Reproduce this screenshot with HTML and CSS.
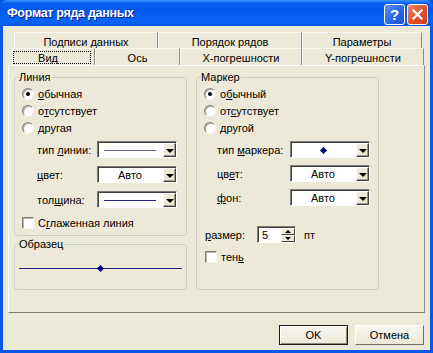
FILE: index.html
```html
<!DOCTYPE html>
<html>
<head>
<meta charset="utf-8">
<link rel="stylesheet" href="styles.css">
</head>
<body>
<div class="window">
  <div class="titlebar">
    <span class="title">Формат ряда данных</span>
    <div class="tbtns">
      <div class="tbtn help">?</div>
      <div class="tbtn close"><svg width="13" height="13" viewBox="0 0 13 13"><path d="M2.5 2.5L10.5 10.5M10.5 2.5L2.5 10.5" stroke="#fff" stroke-width="2.2" stroke-linecap="square"/></svg></div>
    </div>
  </div>
  <div class="client">
    <div class="tabs">
      <div class="tabrow row1">
        <div class="tab">Подписи данных</div>
        <div class="tab">Порядок рядов</div>
        <div class="tab">Параметры</div>
      </div>
      <div class="tabrow row2">
        <div class="tab sel"><span class="focus">Вид</span></div>
        <div class="tab">Ось</div>
        <div class="tab">X-погрешности</div>
        <div class="tab">Y-погрешности</div>
      </div>
    </div>
    <div class="panel">
      <div class="col-left">
        <div class="group g-line">
          <span class="legend">Линия</span>
          <div class="radios">
            <div class="opt"><span class="radio on"></span><span><u>о</u>бычная</span></div>
            <div class="opt"><span class="radio"></span><span>о<u>т</u>сутствует</span></div>
            <div class="opt"><span class="radio"></span><span>другая</span></div>
          </div>
          <div class="fields fl-left">
            <div class="field"><span class="flabel">тип <u>л</u>инии:</span><div class="combo"><div class="cval"><span class="sline thin"></span></div><div class="carrow"></div></div></div>
            <div class="field"><span class="flabel"><u>ц</u>вет:</span><div class="combo"><div class="cval">Авто</div><div class="carrow"></div></div></div>
            <div class="field"><span class="flabel">тол<u>щ</u>ина:</span><div class="combo"><div class="cval"><span class="sline"></span></div><div class="carrow"></div></div></div>
          </div>
          <div class="check-row cr-left"><span class="check"></span><span>С<u>г</u>лаженная линия</span></div>
        </div>
        <div class="group g-sample">
          <span class="legend">Образец</span>
          <div class="sample"><span class="dot"></span></div>
        </div>
      </div>
      <div class="group g-marker">
        <span class="legend">Маркер</span>
        <div class="radios">
          <div class="opt"><span class="radio on"></span><span>о<u>б</u>ычный</span></div>
          <div class="opt"><span class="radio"></span><span>от<u>с</u>утствует</span></div>
          <div class="opt"><span class="radio"></span><span>другой</span></div>
        </div>
        <div class="fields fl-right">
          <div class="field"><span class="flabel">тип <u>м</u>аркера:</span><div class="combo"><div class="cval"><span class="diamond"></span></div><div class="carrow"></div></div></div>
          <div class="field"><span class="flabel">цв<u>е</u>т:</span><div class="combo"><div class="cval">Авто</div><div class="carrow"></div></div></div>
          <div class="field"><span class="flabel"><u>ф</u>он:</span><div class="combo"><div class="cval">Авто</div><div class="carrow"></div></div></div>
        </div>
        <div class="size-row">
          <span class="slabel"><u>р</u>азмер:</span>
          <div class="spin"><span class="sval">5</span><div class="sbtns"><div class="sbtn up"></div><div class="sbtn down"></div></div></div>
          <span class="unit">пт</span>
        </div>
        <div class="check-row cr-right"><span class="check"></span><span>тен<u>ь</u></span></div>
      </div>
    </div>
    <div class="footer">
      <div class="btn default">OK</div>
      <div class="btn">Отмена</div>
    </div>
  </div>
</div>
</body>
</html>
```
FILE: styles.css
```css
html, body {
  margin: 0;
  padding: 0;
  background: #0054E3;
}
body {
  width: 433px;
  height: 353px;
  overflow: hidden;
  font-family: "Liberation Sans", Arial, sans-serif;
  font-size: 11px;
  color: #000;
}
u { text-decoration: underline; text-underline-offset: 1px; }

.window {
  width: 433px;
  height: 353px;
  box-sizing: border-box;
  display: flex;
  flex-direction: column;
  background: #0A58E8;
  border-radius: 7px 7px 0 0;
  overflow: hidden;
}
.titlebar {
  height: 26px;
  flex: none;
  display: flex;
  align-items: center;
  justify-content: space-between;
  padding: 0 5px 0 7px;
  background: linear-gradient(#3D95FF 0, #0A61EE 12%, #0058EE 40%, #0764F5 80%, #0A60EE 92%, #0150DD 100%);
}
.title {
  color: #fff;
  font-weight: bold;
  font-size: 12.5px;
  letter-spacing: -0.3px;
  text-shadow: 1px 1px 0 #0A1E8C;
}
.tbtns { display: flex; gap: 2px; margin-top: 2px; }
.tbtn {
  width: 19px;
  height: 19px;
  border: 1px solid #fff;
  border-radius: 3px;
  display: flex;
  align-items: center;
  justify-content: center;
  color: #fff;
  font-weight: bold;
  font-size: 15px;
}
.help { background: linear-gradient(135deg, #5C94F8, #2663E0 60%, #1E54D0); }
.close { background: linear-gradient(135deg, #F08A68, #E0502A 55%, #C83C1C); }

.client {
  flex: 1;
  margin: 0 3px 3px 3px;
  background: #ECE9D8;
  padding-top: 6px;
  display: flex;
  flex-direction: column;
}
.tabs { display: flex; flex-direction: column; }
.tabrow { display: grid; }
.row1 {
  margin-left: 11px;
  grid-template-columns: 144px 144px 120px;
  height: 16px;
}
.row2 {
  margin-left: 9px;
  grid-template-columns: 83px 85px 122px 122px;
  height: 17px;
}
.tab {
  box-sizing: border-box;
  display: flex;
  align-items: center;
  justify-content: center;
  border-top: 1px solid #F7F6F0;
  border-left: 1px solid #FFFFFF;
  border-right: 1px solid #8C8A7E;
  line-height: 12px;
}
.row1 .tab { padding-top: 2px; }
.row2 .tab { padding-top: 1px; }
.tab.sel { justify-content: flex-start; padding: 1px 0 0 0; }
.focus {
  width: 78px;
  height: 13px;
  box-sizing: border-box;
  border: 1px dotted #000;
  display: flex;
  align-items: center;
  justify-content: center;
  padding-right: 8px;
}

.panel {
  margin: 0 5px;
  height: 248px;
  box-sizing: border-box;
  border-top: 1px solid #FFFFFF;
  border-left: 1px solid #FFFFFF;
  border-right: 1px solid #8C8A7E;
  border-bottom: 1px solid #7E7C6E;
  padding: 11px 0 0 5px;
  display: flex;
  gap: 9px;
  align-items: flex-start;
}
.col-left {
  width: 173px;
  display: flex;
  flex-direction: column;
  gap: 8px;
}
.group {
  position: relative;
  box-sizing: border-box;
  border: 1px solid #D0CEBF;
  border-radius: 3px;
  display: flex;
  flex-direction: column;
}
.legend {
  position: absolute;
  top: -7px;
  left: 3px;
  padding: 0 1px;
  background: #ECE9D8;
  line-height: 13px;
}
.g-line { height: 159px; }
.g-sample { height: 46px; }
.g-marker { width: 183px; height: 213px; }

.radios {
  display: flex;
  flex-direction: column;
  margin-top: 7px;
  padding-left: 7px;
}
.opt {
  height: 17px;
  display: flex;
  align-items: center;
  gap: 4px;
}
.radio {
  width: 12px;
  height: 12px;
  box-sizing: border-box;
  border-radius: 50%;
  border: 1px solid;
  border-color: #808080 #F4F4F0 #F4F4F0 #808080;
  background: #fff;
  box-shadow: inset 1px 1px 0 #B0AEA0;
  display: flex;
  align-items: center;
  justify-content: center;
}
.radio.on::after {
  content: "";
  width: 4px;
  height: 4px;
  border-radius: 50%;
  background: #000;
}

.fields {
  display: flex;
  flex-direction: column;
  margin-top: 5px;
}
.fl-left { gap: 8px; padding-left: 22px; }
.fl-right { gap: 7px; padding-left: 20px; }
.field {
  display: flex;
  align-items: center;
  height: 17px;
}
.fl-left .flabel { width: 60px; }
.fl-right .flabel { width: 73px; }
.combo {
  width: 80px;
  height: 17px;
  box-sizing: border-box;
  border: 1px solid;
  border-color: #7A7A7A #FFFFFF #FFFFFF #7A7A7A;
  box-shadow: inset 1px 1px 0 #404040;
  background: #fff;
  display: flex;
  padding: 1px 0 0 1px;
}
.cval {
  flex: 1;
  display: flex;
  align-items: center;
  justify-content: center;
  padding-right: 2px;
}
.carrow {
  width: 13px;
  box-sizing: border-box;
  background: #ECE9D8;
  border: 1px solid;
  border-color: #FFFFFF #404040 #404040 #FFFFFF;
  box-shadow: inset -1px -1px 0 #9D9B8E;
  display: flex;
  align-items: center;
  justify-content: center;
}
.carrow::after {
  content: "";
  border-top: 4px solid #000;
  border-left: 4px solid transparent;
  border-right: 4px solid transparent;
  margin-top: 1px;
}
.sline {
  width: 52px;
  height: 1px;
  background: #23237E;
}
.sline.thin { background: #6464A8; }
.diamond {
  width: 5px;
  height: 5px;
  background: #000080;
  transform: rotate(45deg);
}

.check-row {
  display: flex;
  align-items: center;
  gap: 4px;
  height: 12px;
}
.cr-left { margin-top: 9px; padding-left: 7px; }
.cr-right { margin-top: 8px; padding-left: 8px; gap: 4px; }
.check {
  width: 12px;
  height: 12px;
  box-sizing: border-box;
  border: 1px solid;
  border-color: #808080 #F4F4F0 #F4F4F0 #808080;
  box-shadow: inset 1px 1px 0 #B8B6A8;
  background: #fff;
}

.sample {
  margin: 23px 4px 0 4px;
  height: 1px;
  background: #23237E;
  display: flex;
  align-items: center;
  justify-content: center;
}
.dot {
  width: 5px;
  height: 5px;
  background: #000080;
  transform: rotate(45deg);
}

.size-row {
  display: flex;
  align-items: center;
  margin-top: 20px;
  padding-left: 8px;
  height: 17px;
}
.slabel { width: 52px; }
.spin {
  width: 39px;
  height: 17px;
  box-sizing: border-box;
  border: 1px solid;
  border-color: #7A7A7A #FFFFFF #FFFFFF #7A7A7A;
  box-shadow: inset 1px 1px 0 #404040;
  background: #fff;
  display: flex;
  padding: 1px 0 0 1px;
}
.sval { flex: 1; padding-left: 3px; line-height: 14px; }
.sbtns {
  width: 14px;
  display: flex;
  flex-direction: column;
}
.sbtn {
  flex: 1;
  box-sizing: border-box;
  background: #ECE9D8;
  border: 1px solid;
  border-color: #FFFFFF #404040 #404040 #FFFFFF;
  display: flex;
  align-items: center;
  justify-content: center;
}
.sbtn.up::after {
  content: "";
  border-bottom: 3px solid #000;
  border-left: 3px solid transparent;
  border-right: 3px solid transparent;
}
.sbtn.down::after {
  content: "";
  border-top: 3px solid #000;
  border-left: 3px solid transparent;
  border-right: 3px solid transparent;
}
.unit { margin-left: 8px; }

.footer {
  display: flex;
  justify-content: flex-end;
  gap: 7px;
  padding: 12px 6px 0 0;
}
.btn {
  width: 69px;
  height: 20px;
  box-sizing: border-box;
  border: 1px solid;
  border-color: #FFFFFF #716F64 #716F64 #FFFFFF;
  background: linear-gradient(#F6F5EF, #ECE9D8);
  display: flex;
  align-items: center;
  justify-content: center;
}
.btn.default {
  border: 1px solid #1C1C1C;
  box-shadow: inset 1px 1px 0 #fff, inset -1px -1px 0 #8C8A7E;
}
```
